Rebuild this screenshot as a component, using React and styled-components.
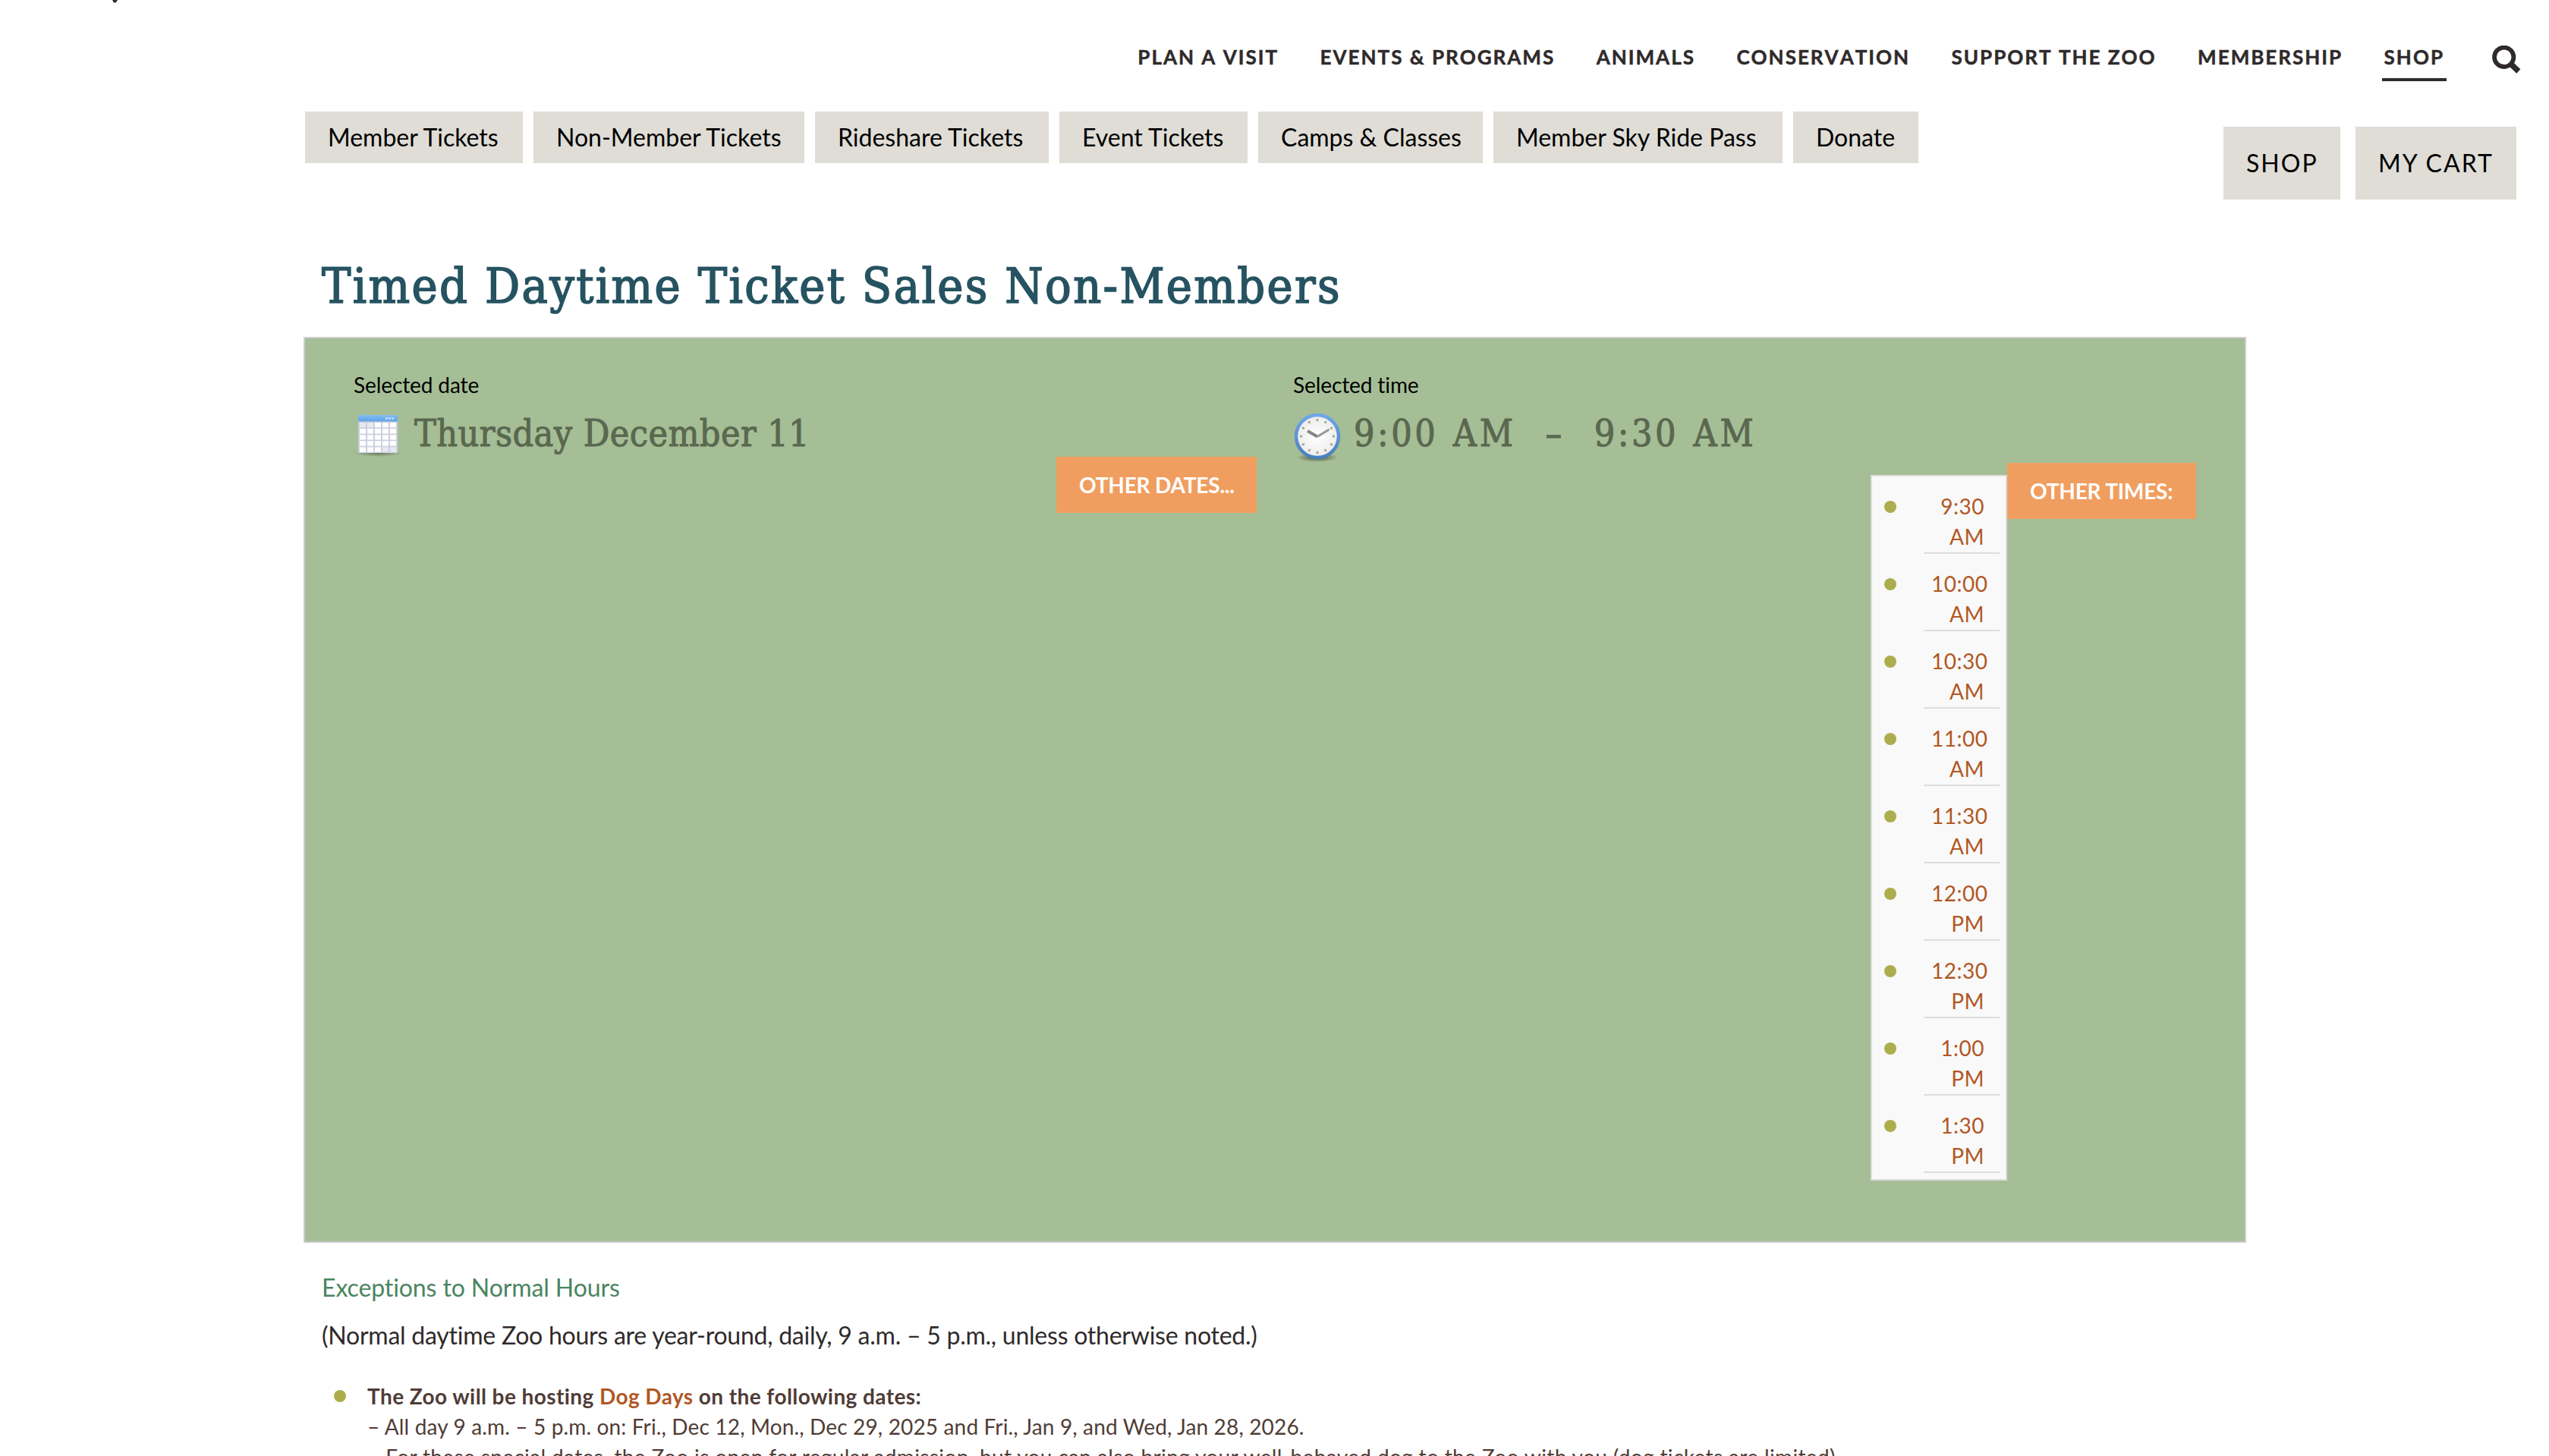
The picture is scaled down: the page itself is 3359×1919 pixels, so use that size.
import React from 'react'
import styled, { createGlobalStyle } from 'styled-components'

const serif = `'DejaVu Serif Condensed', 'DejaVu Serif', serif`

const GlobalStyle = createGlobalStyle`
*{box-sizing:border-box;}
html,body{margin:0;padding:0;background:#fff;height:1919px;overflow:hidden;}
body{font-family:Lato,sans-serif;font-variant-ligatures:none;color:#2f2a2b;}
a{color:inherit;text-decoration:none;}
ul{list-style:none;margin:0;padding:0;}
`
const Page = styled.div`
width:3359px;
height:1919px;
overflow:hidden;
`
const Header = styled.header`
height:147px;
display:flex;
justify-content:space-between;
align-items:flex-start;
padding:0 37px 0 148px;
`
const LogoTip = styled.svg`
display:block;
width:8px;
height:4px;
`
const Nav = styled.nav`
display:flex;
align-items:flex-start;
padding-top:60px;
`
const NavLink = styled.a`
font-size:26px;
font-weight:700;
font-kerning:none;
line-height:31px;
letter-spacing:2px;
-webkit-text-stroke:.5px;
height:47px;
margin-left:48.5px;
padding:0 3px;
border-bottom:4px solid ${p => p.$active ? '#2f2a2b' : 'transparent'};
`
const SearchIcon = styled.svg`
width:38px;
height:38px;
margin-left:60px;
`
const Toolbar = styled.div`
display:flex;
justify-content:space-between;
padding:0 43px 0 402px;
height:195px;
`
const ButtonRow = styled.div`
display:flex;
gap:${p => p.$gap};
padding-top:${p => p.$top || '0'};
`
const TicketButton = styled.a`
width:${p => p.$w}px;
height:68px;
padding-left:30px;
line-height:68px;
font-size:32px;
white-space:nowrap;
color:#000;
background:#dfddd6;
`
const CartButton = styled.a`
width:${p => p.$w}px;
height:96px;
padding-left:30px;
line-height:96px;
font-size:32px;
letter-spacing:2px;
white-space:nowrap;
color:#000;
background:#dfddd6;
`
const Title = styled.h1`
font-family:${serif};
font-stretch:condensed;
font-weight:400;
font-size:64px;
line-height:70px;
letter-spacing:2.4px;
-webkit-text-stroke:1.6px;
height:102px;
margin:0;
padding-left:424px;
white-space:nowrap;
color:#265361;
`
const Panel = styled.section`
display:flex;
width:2560px;
height:1194px;
margin-left:400px;
padding:41px 64px 0 64px;
background:#a5be96;
border:2px solid #ccc;
`
const Column = styled.div`
width:${p => p.$w}px;
padding-right:${p => p.$right || '0'};
display:flex;
flex-direction:column;
`
const Label = styled.div`
font-size:28px;
line-height:40px;
letter-spacing:-.1px;
color:#000;
`
const Picked = styled.div`
display:flex;
align-items:flex-start;
height:${p => p.$h}px;
padding-top:16px;
font-family:${serif};
font-stretch:condensed;
font-size:48px;
line-height:56px;
letter-spacing:${p => p.$spacing};
word-spacing:${p => p.$words || '0'};
-webkit-text-stroke:1px;
white-space:pre;
color:#5a6850;
`
const PickedIcon = styled.svg`
width:64px;
height:66px;
margin-right:16px;
flex:none;
`
const OtherRow = styled.div`
display:flex;
justify-content:flex-end;
align-items:flex-start;
`
const OtherButton = styled.a`
height:74px;
width:${p => p.$w}px;
padding-left:30px;
line-height:74px;
font-size:28px;
font-weight:700;
letter-spacing:-.2px;
white-space:nowrap;
color:#fff;
background:#f09e60;
`
const TimeList = styled.ul`
width:180px;
height:930px;
margin-top:16px;
background:#f9f9f9;
border:2px solid #ddd;
`
const TimeItem = styled.li`
display:flex;
justify-content:space-between;
padding:0 8px 0 16px;
`
const Dot = styled.span`
flex:none;
width:16px;
height:16px;
margin-top:${p => p.$top};
border-radius:50%;
background:#acae4d;
`
const TimeLink = styled.a`
width:100px;
height:102px;
padding:19px 20px 0 10px;
border-bottom:2px solid #ddd;
font-size:28px;
line-height:40px;
letter-spacing:.5px;
text-align:right;
color:#b15724;
`
const Info = styled.section`
padding:35px 0 0 424px;
`
const InfoTitle = styled.h2`
margin:0 0 15px;
font-size:32px;
font-weight:400;
line-height:48px;
letter-spacing:-.1px;
color:#4b855f;
`
const InfoText = styled.p`
margin:0 0 36px;
font-size:32px;
line-height:48px;
letter-spacing:-.24px;
`
const Notice = styled.li`
display:flex;
gap:28px;
padding-left:16px;
font-size:28px;
line-height:40px;
color:#503c36;
white-space:nowrap;
`
const Line = styled.div`
font-weight:${p => p.$bold ? 700 : 400};
letter-spacing:${p => p.$spacing};
`
const DogLink = styled.a`
color:#b15724;
`

const navItems = [
    ['PLAN A VISIT'],
    ['EVENTS & PROGRAMS'],
    ['ANIMALS'],
    ['CONSERVATION'],
    ['SUPPORT THE ZOO'],
    ['MEMBERSHIP'],
    ['SHOP', true],
]

const tickets = [
    ['Member Tickets', 287],
    ['Non-Member Tickets', 357],
    ['Rideshare Tickets', 308],
    ['Event Tickets', 248],
    ['Camps & Classes', 296],
    ['Member Sky Ride Pass', 381],
    ['Donate', 165],
]

const times = ['9:30 AM', '10:00 AM', '10:30 AM', '11:00 AM', '11:30 AM', '12:00 PM', '12:30 PM', '1:00 PM', '1:30 PM']

function Calendar(){
    const cells = []
    for (let r = 0; r < 5; r++) {
        for (let c = 0; c < 5; c++) {
            const dim = (r === 0 && c < 2) || (r === 4 && c > 2)
            cells.push(<rect key={r + '-' + c} x={8 + c * 10} y={14 + r * 8.1} width="8" height="6.4" fill={dim ? '#e6e8f2' : '#fff'} />)
        }
    }
    return(
        <PickedIcon viewBox="0 0 64 66">
            <defs>
                <linearGradient id="calTop" x1="0" y1="0" x2="0" y2="1">
                    <stop offset="0" stopColor="#82bdf3" />
                    <stop offset="1" stopColor="#5ea3e6" />
                </linearGradient>
                <radialGradient id="calShade">
                    <stop offset="0" stopColor="#4c5945" stopOpacity=".7" />
                    <stop offset="1" stopColor="#4c5945" stopOpacity="0" />
                </radialGradient>
            </defs>
            <ellipse cx="32" cy="54" rx="32" ry="5" fill="url(#calShade)" />
            <rect x="6" y="5" width="52" height="49" fill="#cdcfdf" />
            <rect x="6" y="4" width="52" height="8.5" fill="url(#calTop)" />
            <path d="M42 8.5h12" stroke="#c4e0fa" strokeWidth="2.5" strokeDasharray="3 1" />
            {cells}
        </PickedIcon>
    )
}

function Clock(){
    const ticks = []
    for (let i = 0; i < 12; i++) {
        ticks.push(<rect key={i} x="30.6" y="9" width="2.8" height="3.2" fill="#a3aa85" transform={`rotate(${i * 30} 32 32)`} />)
    }
    return(
        <PickedIcon viewBox="0 0 64 66">
            <defs>
                <linearGradient id="clockRim" x1="0" y1="0" x2="0" y2="1">
                    <stop offset="0" stopColor="#6fa6ea" />
                    <stop offset="1" stopColor="#4b80bc" />
                </linearGradient>
                <radialGradient id="clockFace">
                    <stop offset="0" stopColor="#fff" />
                    <stop offset="1" stopColor="#ececec" />
                </radialGradient>
                <radialGradient id="clockShade">
                    <stop offset="0" stopColor="#39452f" stopOpacity=".9" />
                    <stop offset="1" stopColor="#39452f" stopOpacity="0" />
                </radialGradient>
            </defs>
            <ellipse cx="32" cy="60" rx="27" ry="6" fill="url(#clockShade)" />
            <circle cx="32" cy="32" r="28" fill="url(#clockFace)" stroke="url(#clockRim)" strokeWidth="4.5" />
            {ticks}
            <path d="M19 25l13 7.5" stroke="#858585" strokeWidth="4" />
            <path d="M32 32.5l15.5-9.5" stroke="#999" strokeWidth="3" />
        </PickedIcon>
    )
}

export default function App(){
    return(
        <Page>
            <GlobalStyle />
            <Header>
                <LogoTip viewBox="0 0 8 4"><path d="M0 0h7L4.5 3.5H2z" fill="#2f2a2b" /></LogoTip>
                <Nav>
                    {navItems.map(([name, active]) => (
                        <NavLink key={name} $active={active}>{name}</NavLink>
                    ))}
                    <SearchIcon viewBox="0 0 38 38" fill="none" stroke="#2f2a2b">
                        <circle cx="15.7" cy="15.3" r="12.7" strokeWidth="5.8" />
                        <path d="M25 24.5l9.8 9.5" strokeWidth="7.5" />
                    </SearchIcon>
                </Nav>
            </Header>
            <Toolbar>
                <ButtonRow $gap="14px">
                    {tickets.map(([name, w]) => (
                        <TicketButton key={name} $w={w}>{name}</TicketButton>
                    ))}
                </ButtonRow>
                <ButtonRow $gap="20px" $top="20px">
                    <CartButton $w={154}>SHOP</CartButton>
                    <CartButton $w={212}>MY CART</CartButton>
                </ButtonRow>
            </Toolbar>
            <Title>Timed Daytime Ticket Sales Non-Members</Title>
            <Panel>
                <Column $w={1238} $right="48px">
                    <Label>Selected date</Label>
                    <Picked $h={75} $spacing=".45px"><Calendar />Thursday December 11</Picked>
                    <OtherRow>
                        <OtherButton $w={264}>OTHER DATES...</OtherButton>
                    </OtherRow>
                </Column>
                <Column $w={1190}>
                    <Label>Selected time</Label>
                    <Picked $h={83} $spacing="3.6px" $words="2.2px"><Clock />{'9:00 AM  –  9:30 AM'}</Picked>
                    <OtherRow>
                        <TimeList>
                            {times.map(time => (
                                <TimeItem key={time}>
                                    <Dot $top="32px" />
                                    <TimeLink>{time}</TimeLink>
                                </TimeItem>
                            ))}
                        </TimeList>
                        <OtherButton $w={249}>OTHER TIMES:</OtherButton>
                    </OtherRow>
                </Column>
            </Panel>
            <Info>
                <InfoTitle>Exceptions to Normal Hours</InfoTitle>
                <InfoText>(Normal daytime Zoo hours are year-round, daily, 9 a.m. – 5 p.m., unless otherwise noted.)</InfoText>
                <ul>
                    <Notice>
                        <Dot $top="12px" />
                        <div>
                            <Line $bold $spacing=".42px">The Zoo will be hosting <DogLink>Dog Days</DogLink> on the following dates:</Line>
                            <Line $spacing=".15px">– All day 9 a.m. – 5 p.m. on: Fri., Dec 12, Mon., Dec 29, 2025 and Fri., Jan 9, and Wed, Jan 28, 2026.</Line>
                            <Line $spacing=".37px">– For these special dates, the Zoo is open for regular admission, but you can also bring your well-behaved dog to the Zoo with you (dog tickets are limited).</Line>
                        </div>
                    </Notice>
                </ul>
            </Info>
        </Page>
    )
}
